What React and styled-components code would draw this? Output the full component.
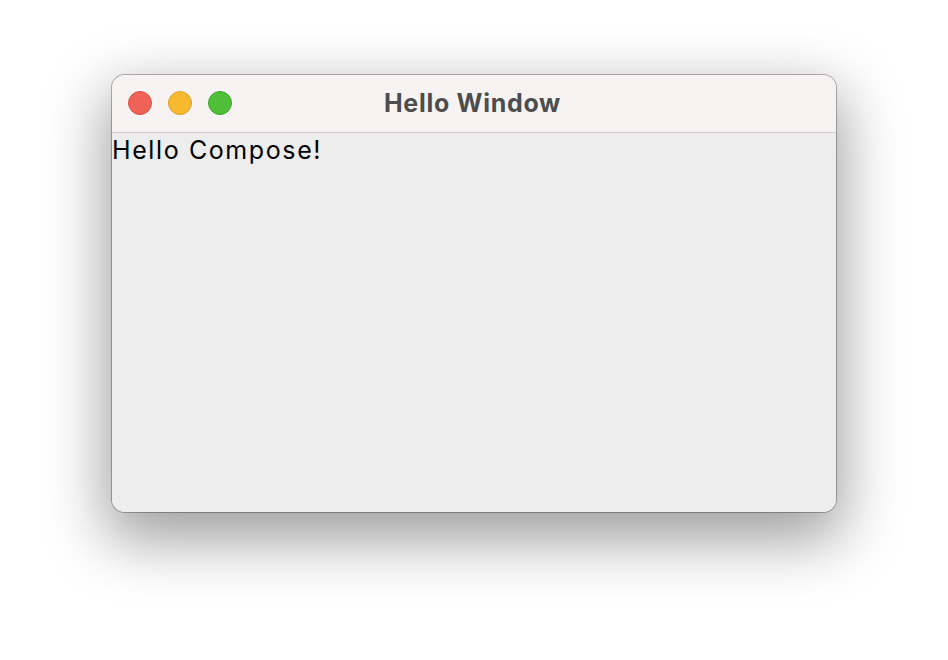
import React from 'react';
import styled, { createGlobalStyle } from 'styled-components';

const GlobalStyle = createGlobalStyle`
  html, body {
    margin: 0;
    padding: 0;
    background: #ffffff;
  }
`;

const Desktop = styled.div`
  width: 948px;
  height: 660px;
  box-sizing: border-box;
  padding: 75px 112px 148px;
  display: flex;
`;

const Window = styled.div`
  flex: 1;
  display: flex;
  flex-direction: column;
  border-radius: 13px;
  overflow: hidden;
  background: #ececec;
  box-shadow: 0 0 0 1px rgba(0, 0, 0, 0.28), 0 22px 60px 6px rgba(0, 0, 0, 0.38);
`;

const TitleBar = styled.div`
  position: relative;
  height: 57px;
  flex: none;
  display: flex;
  align-items: center;
  justify-content: center;
  background: #f6f3f2;
  border-bottom: 1px solid #cfcdcd;
`;

const Lights = styled.div`
  position: absolute;
  left: 16px;
  top: 16px;
  display: flex;
  gap: 16px;
`;

const Light = styled.span`
  width: 24px;
  height: 24px;
  box-sizing: border-box;
  border-radius: 50%;
  background: ${(p) => p.$fill};
  border: 1px solid ${(p) => p.$edge};
`;

const Title = styled.div`
  font-family: Inter, 'Liberation Sans', Arial, sans-serif;
  font-weight: 700;
  font-size: 25px;
  letter-spacing: 0.7px;
  color: #4d4d4d;
  margin-left: -3px;
  margin-top: -1px;
`;

const Content = styled.div`
  flex: 1;
  background: #ededed;
`;

const Greeting = styled.div`
  font-family: Inter, 'Liberation Sans', Arial, sans-serif;
  font-size: 25px;
  letter-spacing: 1.6px;
  line-height: 34px;
  color: #000;
`;

export default function App() {
  return (
    <>
      <GlobalStyle />
      <Desktop>
        <Window>
          <TitleBar>
            <Lights>
              <Light $fill="#ef6256" $edge="#d8524a" />
              <Light $fill="#f7b92f" $edge="#dba12a" />
              <Light $fill="#4fbe38" $edge="#3ea52f" />
            </Lights>
            <Title>Hello Window</Title>
          </TitleBar>
          <Content>
            <Greeting>Hello Compose!</Greeting>
          </Content>
        </Window>
      </Desktop>
    </>
  );
}
